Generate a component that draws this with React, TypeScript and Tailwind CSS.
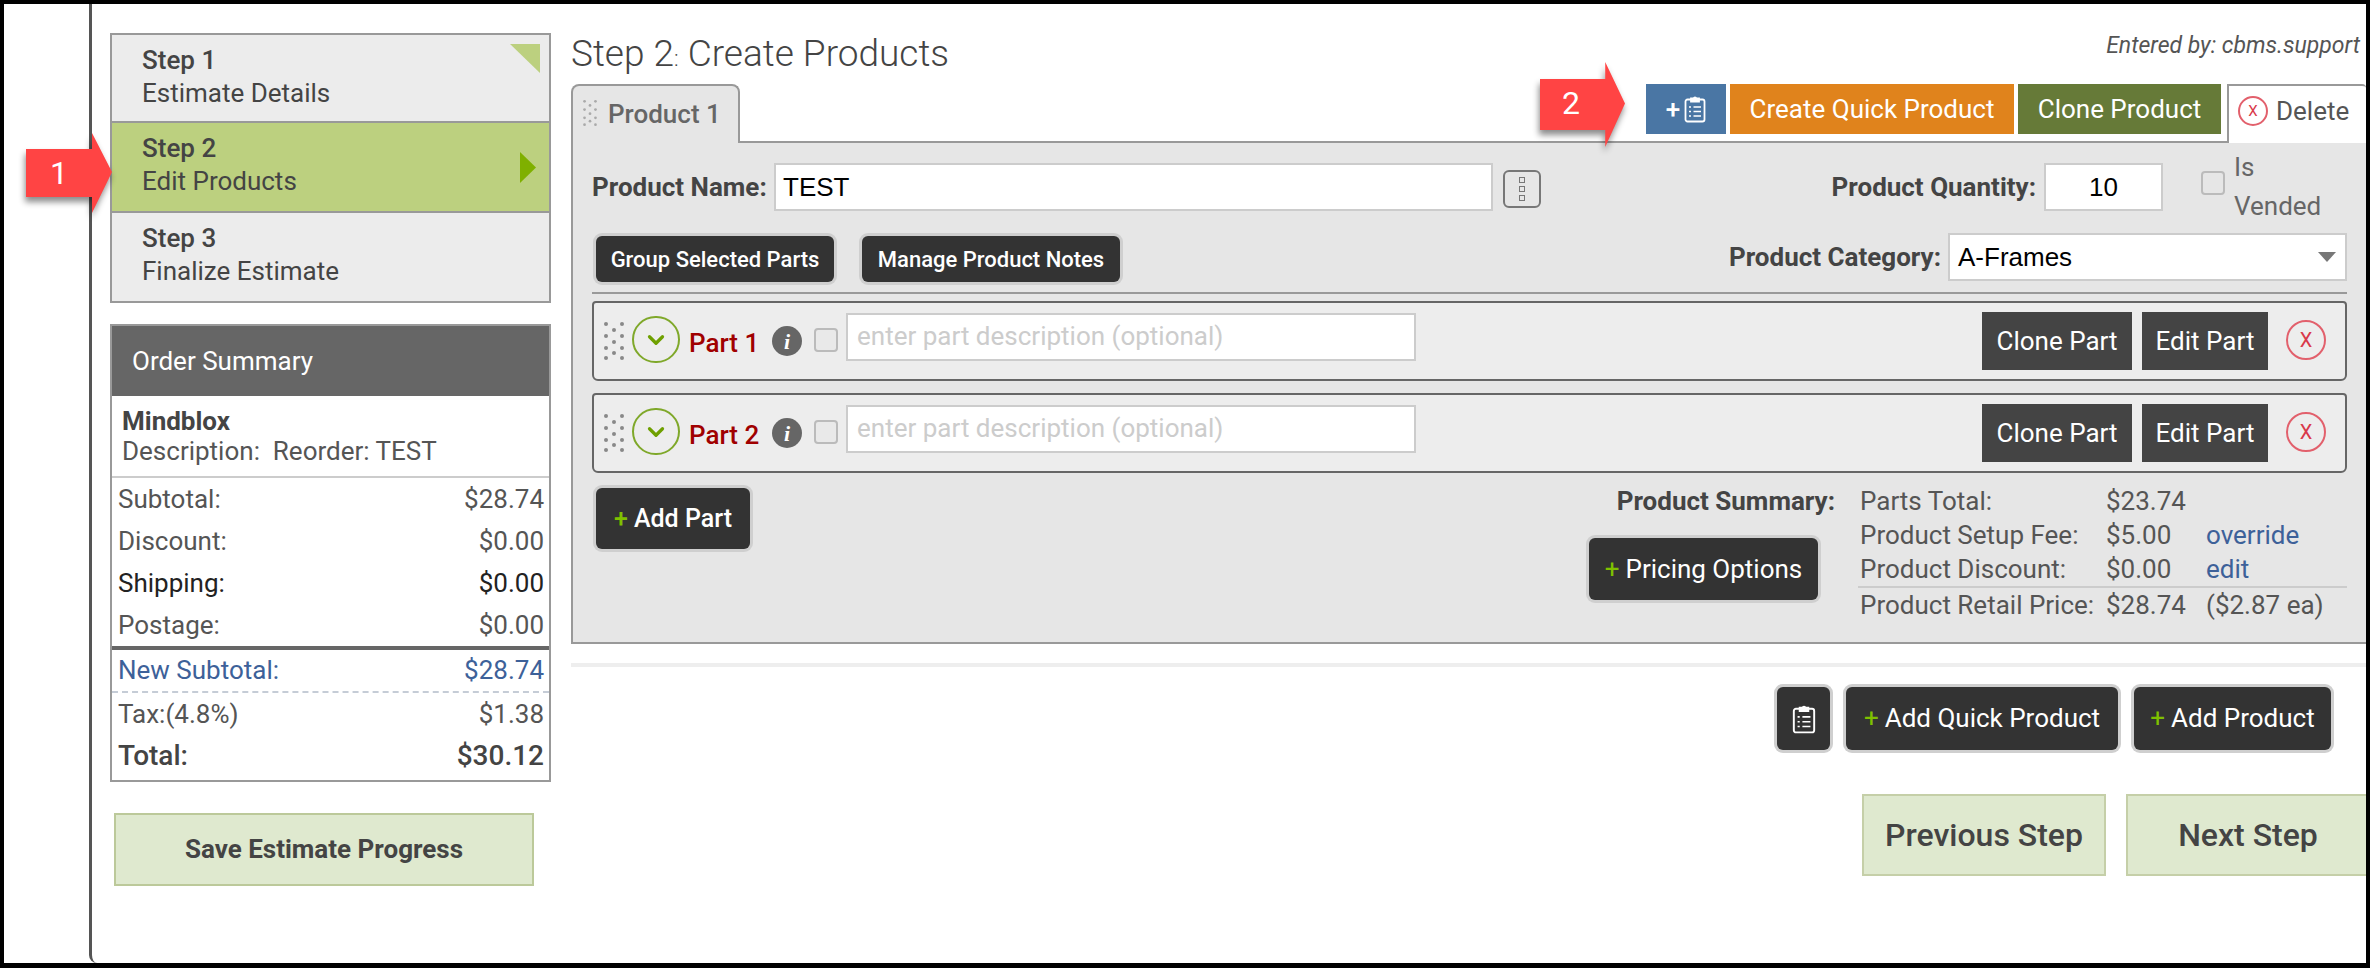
import { ChevronDown } from "lucide-react";

const rowsTop = [
  { label: "Subtotal:", value: "$28.74", color: "text-[#555]" },
  { label: "Discount:", value: "$0.00", color: "text-[#555]" },
  { label: "Shipping:", value: "$0.00", color: "text-[#222]" },
  { label: "Postage:", value: "$0.00", color: "text-[#555]" },
];

const Grip = ({ className }: { className: string }) => (
  <svg viewBox="0 0 20 38" className={className}>
    {[
      [2, 2], [18, 2], [10, 8], [2, 14], [18, 14], [10, 20], [2, 26], [18, 26], [10, 31], [2, 36], [18, 36],
    ].map(([cx, cy], i) => (
      <circle key={i} cx={cx} cy={cy} r="2" fill="currentColor" />
    ))}
  </svg>
);

const Clipboard = ({ className }: { className: string }) => (
  <svg viewBox="0 0 22 28" fill="none" stroke="currentColor" strokeWidth="1.8" className={className}>
    <rect x="1.5" y="4.5" width="19" height="22" rx="2" />
    <path d="M7 6.5V3.5h2.5a1.6 1.6 0 0 1 3 0H15v3z" fill="currentColor" />
    <path d="M5 12h2M9.5 12H17M5 16.5h2M9.5 16.5H17M5 21h2M9.5 21H17" strokeWidth="1.5" />
  </svg>
);

const RedX = ({ className }: { className: string }) => (
  <span className={`flex items-center justify-center rounded-full border-2 border-[#e2606c] text-[#d9394a] ${className}`}>
    X
  </span>
);

const DarkButton = ({ className, children }: { className: string; children: React.ReactNode }) => (
  <button className={`flex items-center justify-center rounded-md bg-[#333] text-white shadow-[0_0_0_3px_#cfcfcf] ${className}`}>
    {children}
  </button>
);

const Plus = () => <span className="mr-[6px] text-[#7fc000]">+</span>;

const Arrow = ({ className, label, text }: { className: string; label: string; text: string }) => (
  <div className={`absolute z-10 ${className}`}>
    <svg viewBox="0 0 86 80" preserveAspectRatio="none" className="h-full w-full overflow-visible drop-shadow-[-1px_5px_3px_rgba(0,0,0,0.45)]">
      <polygon points="0,16 66,16 66,0 86,39 66,80 66,64 0,64" fill="#ff4444" />
    </svg>
    <span className={`absolute top-0 flex h-full items-center text-[32px] text-white ${text}`}>{label}</span>
  </div>
);

const Part = ({ name }: { name: string }) => (
  <div className="flex h-[80px] items-start rounded-b-md rounded-t-sm border-2 border-[#666] bg-[#ededed]">
    <Grip className="ml-[10px] mt-[19px] h-[38px] w-[20px] text-[#888]" />
    <span className="ml-[8px] mt-[13px] flex h-[47px] w-[48px] items-center justify-center rounded-full border-2 border-[#7fa82a]">
      <ChevronDown className="h-[26px] w-[26px] text-[#6fa000]" strokeWidth={3} />
    </span>
    <span className="ml-[9px] mt-[24px] w-[83px] text-[26px] font-medium leading-[32px] text-[#a00000]">{name}</span>
    <span className="mt-[23px] flex h-[30px] w-[30px] items-center justify-center rounded-full bg-[#666] font-['Liberation_Serif',serif] text-[22px] font-bold italic text-white">
      i
    </span>
    <span className="ml-[12px] mt-[25px] h-[24px] w-[24px] rounded-[4px] border-2 border-[#bbb] bg-[#e9e9e9]" />
    <div className="ml-[8px] mt-[10px] flex h-[48px] w-[570px] items-center border-2 border-[#ccc] bg-white pb-[2px] pl-[9px] text-[26px] text-[#ccc]">
      enter part description (optional)
    </div>
    <button className="ml-auto mt-[9px] h-[58px] w-[150px] bg-[#444] text-[26px] text-white">Clone Part</button>
    <button className="ml-[10px] mt-[9px] h-[58px] w-[126px] bg-[#444] text-[26px] text-white">Edit Part</button>
    <RedX className="ml-[18px] mr-[19px] mt-[17px] h-[40px] w-[40px] text-[20px]" />
  </div>
);

export default function App() {
  return (
    <div className="relative h-[968px] w-[2370px] overflow-hidden bg-black pb-[5px] pl-[4px] pr-[4px] pt-[4px] font-['Roboto',sans-serif]">
      <Arrow className="left-[26px] top-[133px] h-[80px] w-[86px]" label="1" text="left-[24px]" />
      <Arrow className="left-[1540px] top-[62px] h-[85px] w-[85px]" label="2" text="left-[22px] -translate-y-[2px]" />

      <div className="flex h-full bg-white">
        <div className="w-[85px] shrink-0" />
        <div className="flex min-w-0 flex-1 overflow-hidden rounded-bl-lg border-l-[3px] border-[#555] pl-[18px] pt-[29px]">
          {/* left column */}
          <div className="w-[441px] shrink-0">
            <div className="border-2 border-[#999] bg-[#ececec] text-[#444]">
              <div className="relative h-[88px] border-b-2 border-[#999] pl-[30px] pt-[7px]">
                <div className="text-[26px] font-medium leading-[36px]">Step 1</div>
                <div className="text-[26px] leading-[30px]">Estimate Details</div>
                <svg viewBox="0 0 30 29" className="absolute right-[9px] top-[9px] h-[29px] w-[30px]">
                  <polygon points="0,0 30,0 30,29" fill="#bcd07f" />
                </svg>
              </div>
              <div className="relative h-[90px] border-b-2 border-[#999] bg-[#bcd07f] pl-[30px] pt-[7px]">
                <div className="text-[26px] font-medium leading-[36px]">Step 2</div>
                <div className="text-[26px] leading-[30px]">Edit Products</div>
                <svg viewBox="0 0 16 31" className="absolute right-[13px] top-[29px] h-[31px] w-[16px]">
                  <polygon points="0,0 16,15.5 0,31" fill="#7fb000" />
                </svg>
              </div>
              <div className="h-[88px] pl-[30px] pt-[7px]">
                <div className="text-[26px] font-medium leading-[36px]">Step 3</div>
                <div className="text-[26px] leading-[30px]">Finalize Estimate</div>
              </div>
            </div>

            <div className="mt-[21px] border-2 border-[#999] bg-white pb-[3px] text-[26px] text-[#555]">
              <div className="flex h-[70px] items-center bg-[#666] pl-[20px] text-white">Order Summary</div>
              <div className="h-[82px] border-b-2 border-[#ccc] pl-[10px] pt-[9px]">
                <div className="font-bold leading-[32px] text-[#444]">Mindblox</div>
                <div className="leading-[28px]">Description:&nbsp; Reorder: TEST</div>
              </div>
              {rowsTop.map((row) => (
                <div key={row.label} className={`flex h-[42px] items-center justify-between pl-[6px] pr-[5px] ${row.color}`}>
                  <span>{row.label}</span>
                  <span>{row.value}</span>
                </div>
              ))}
              <div className="h-[4px] bg-[#666]" />
              <div className="flex h-[43px] items-center justify-between border-b-2 border-dashed border-[#c5ccd6] pl-[6px] pr-[5px] text-[#3d6199]">
                <span>New Subtotal:</span>
                <span>$28.74</span>
              </div>
              <div className="flex h-[42px] items-center justify-between pl-[6px] pr-[5px]">
                <span>Tax:(4.8%)</span>
                <span>$1.38</span>
              </div>
              <div className="flex h-[42px] items-center justify-between pl-[6px] pr-[5px] text-[28px] font-medium text-[#444]">
                <span>Total:</span>
                <span>$30.12</span>
              </div>
            </div>

            <button className="ml-[4px] mt-[31px] h-[73px] w-[420px] border-2 border-[#bcc99a] bg-[#dfe9cf] text-[26px] font-bold text-[#444]">
              Save Estimate Progress
            </button>
          </div>

          {/* main column */}
          <div className="ml-[20px] min-w-0 flex-1">
            <div className="flex h-[51px] items-start justify-between">
              <h1 className="mt-[3px] text-[37px] font-light leading-[36px] text-[#444]">
                Step 2<span className="text-[22px]">:</span> Create Products
              </h1>
              <span className="mr-[6px] mt-[1px] text-[23px] italic leading-[24px] text-[#555]">Entered by: cbms.support</span>
            </div>

            <div className="flex h-[59px]">
              <div className="flex w-[169px] items-start rounded-t-lg border-2 border-b-0 border-[#999] bg-[#e6e6e6] pl-[10px] pt-[12px] text-[#666]">
                <Grip className="mt-[2px] h-[26px] w-[14px] text-[#aaa]" />
                <span className="ml-[11px] text-[26px] font-medium leading-[32px]">Product 1</span>
              </div>
              <div className="flex flex-1 justify-end gap-[4px] border-b-2 border-[#999] pr-[6px]">
                <button className="flex h-[50px] w-[80px] items-center justify-center bg-[#4a76a4] text-[26px] font-medium text-white">
                  +
                  <Clipboard className="ml-[4px] h-[28px] w-[22px]" />
                </button>
                <button className="h-[50px] w-[284px] bg-[#e0831c] text-[26px] text-white">Create Quick Product</button>
                <button className="h-[50px] w-[203px] bg-[#667a38] text-[26px] text-white">Clone Product</button>
              </div>
              <div className="flex w-[139px] items-start rounded-tr-sm border-l-2 border-t-2 border-[#999] bg-white pl-[9px] pt-[10px] text-[26px] leading-[30px] text-[#555]">
                <RedX className="h-[30px] w-[30px] text-[15px]" />
                <span className="ml-[8px]">Delete</span>
              </div>
            </div>

            <div className="h-[501px] border-b-2 border-l-2 border-[#999] bg-[#e6e6e6] pl-[19px] pr-[19px] pt-[20px]">
              <div className="flex h-[48px] items-center text-[26px] font-bold text-[#444]">
                <span className="w-[182px]">Product Name:</span>
                <div className="flex h-[48px] w-[719px] items-center border-2 border-[#ccc] bg-white pl-[7px] font-['Liberation_Sans',sans-serif] text-[26px] font-normal text-black">
                  TEST
                </div>
                <span className="ml-[10px] mt-[3px] flex h-[38px] w-[38px] flex-col items-center justify-center gap-[3px] rounded-md border-2 border-[#777]">
                  <i className="h-[6px] w-[6px] border border-[#777]" />
                  <i className="h-[6px] w-[6px] border border-[#777]" />
                  <i className="h-[6px] w-[6px] border border-[#777]" />
                </span>
                <span className="ml-auto">Product Quantity:</span>
                <div className="ml-[8px] flex h-[48px] w-[119px] items-center justify-center border-2 border-[#ccc] bg-white font-['Liberation_Sans',sans-serif] text-[26px] font-normal text-black">
                  10
                </div>
                <span className="ml-[38px] h-[24px] w-[24px] -translate-y-[4px] rounded-[4px] border-2 border-[#bbb] bg-[#e6e6e6]" />
                <span className="ml-[9px] w-[113px] font-normal text-[#666]">Is Vended</span>
              </div>

              <div className="mt-[22px] flex h-[49px] items-start">
                <DarkButton className="ml-[4px] mt-[3px] h-[46px] w-[238px] text-[22px] font-medium">Group Selected Parts</DarkButton>
                <DarkButton className="ml-[28px] mt-[3px] h-[46px] w-[258px] text-[22px] font-medium">Manage Product Notes</DarkButton>
                <span className="ml-auto flex h-[48px] items-center text-[26px] font-bold text-[#444]">Product Category:</span>
                <div className="relative ml-[7px] flex h-[48px] w-[399px] items-center border-2 border-[#ccc] bg-white pl-[8px] font-['Liberation_Sans',sans-serif] text-[26px] text-black">
                  A-Frames
                  <svg viewBox="0 0 18 10" className="absolute right-[9px] top-[17px] h-[10px] w-[18px]">
                    <polygon points="0,0 18,0 9,10" fill="#777" />
                  </svg>
                </div>
              </div>

              <div className="mt-[10px] h-[2px] bg-[#999]" />
              <div className="mt-[7px] flex flex-col gap-[12px]">
                <Part name="Part 1" />
                <Part name="Part 2" />
              </div>

              <div className="mt-[11px] flex items-start">
                <DarkButton className="ml-[4px] mt-[4px] h-[61px] w-[154px] text-[25px] font-medium">
                  <Plus />
                  Add Part
                </DarkButton>
                <div className="ml-auto flex w-[246px] flex-col">
                  <span className="self-end text-[26px] font-bold leading-[34px] text-[#444]">Product Summary:</span>
                  <DarkButton className="mt-[20px] h-[62px] w-[229px] text-[26px]">
                    <Plus />
                    Pricing Options
                  </DarkButton>
                </div>
                <div className="ml-[23px] grid w-[489px] grid-cols-[248px_100px_1fr] text-[26px] leading-[34px] text-[#555]">
                  <span className="pl-[2px]">Parts Total:</span>
                  <span>$23.74</span>
                  <span />
                  <span className="pl-[2px]">Product Setup Fee:</span>
                  <span>$5.00</span>
                  <span className="text-[#3d6199]">override</span>
                  <span className="pl-[2px]">Product Discount:</span>
                  <span>$0.00</span>
                  <span className="text-[#3d6199]">edit</span>
                  <div className="col-span-3 h-[2px] bg-[#ccc]" />
                  <span className="pl-[2px]">Product Retail Price:</span>
                  <span>$28.74</span>
                  <span>($2.87 ea)</span>
                </div>
              </div>
            </div>

            <div className="mt-[19px] h-[4px] bg-[#eee]" />

            <div className="mt-[20px] flex justify-end gap-[16px] pr-[35px]">
              <DarkButton className="h-[63px] w-[53px]">
                <Clipboard className="h-[30px] w-[24px]" />
              </DarkButton>
              <DarkButton className="h-[63px] w-[272px] text-[26px]">
                <Plus />
                Add Quick Product
              </DarkButton>
              <DarkButton className="h-[63px] w-[197px] text-[26px]">
                <Plus />
                Add Product
              </DarkButton>
            </div>

            <div className="-mr-[4px] mt-[44px] flex justify-end gap-[20px]">
              <button className="h-[82px] w-[244px] border-2 border-[#c5cfa8] bg-[#dfe9cf] text-[32px] font-medium text-[#444]">Previous Step</button>
              <button className="h-[82px] w-[244px] shrink-0 border-2 border-[#c5cfa8] bg-[#dfe9cf] text-[32px] font-medium text-[#444]">Next Step</button>
            </div>
          </div>
        </div>
      </div>
    </div>
  );
}
